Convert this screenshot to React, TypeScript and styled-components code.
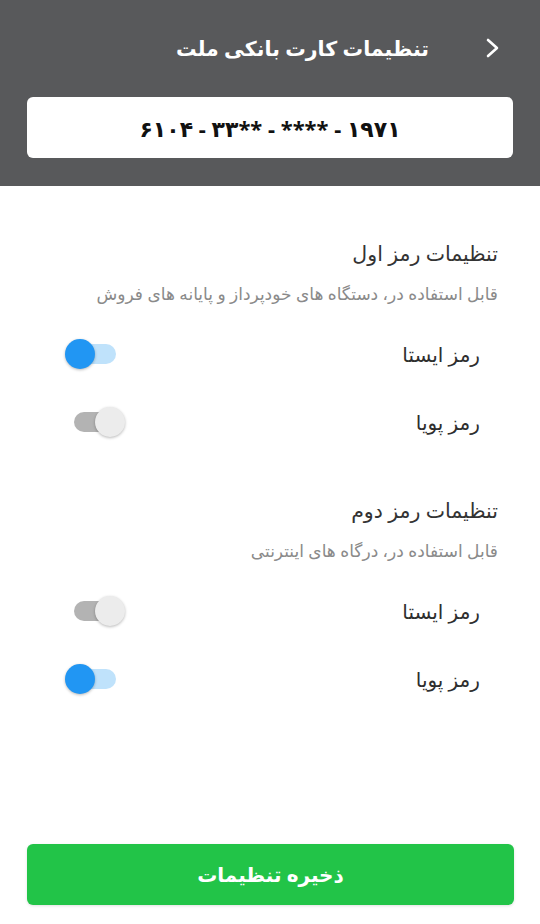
import React from "react";
import styled, { createGlobalStyle } from "styled-components";

const Global = createGlobalStyle`
  html, body { margin: 0; padding: 0; background: #ffffff; }
  body { font-family: "Noto Sans", "DejaVu Sans", sans-serif; }
  * { box-sizing: border-box; }
`;

const Page = styled.div`
  direction: rtl;
  min-height: 100vh;
  display: flex;
  flex-direction: column;
  background: #ffffff;
`;

const Header = styled.header`
  background: #58595b;
  height: 186px;
  padding: 25px 27px 0;
  display: flex;
  flex-direction: column;
`;

const TitleRow = styled.div`
  display: flex;
  align-items: center;
  gap: 56px;
  padding-right: 12px;
  height: 46px;
`;

const BackIcon = styled.svg`
  width: 16px;
  height: 22px;
  flex: none;
`;

const HeaderTitle = styled.h1`
  margin: 0;
  color: #ffffff;
  font-size: 20.5px;
  font-weight: 700;
  line-height: 30px;
`;

const CardBox = styled.div`
  margin-top: 26px;
  height: 61px;
  background: #ffffff;
  border-radius: 6px;
  display: flex;
  align-items: center;
  justify-content: center;
  color: #111111;
  font-size: 22px;
  font-weight: 700;
`;

const CardNumber = styled.span`
  direction: ltr;
  unicode-bidi: isolate;
  white-space: pre;
`;

const Content = styled.main`
  padding-top: 52px;
  display: flex;
  flex-direction: column;
  gap: 39px;
`;

const Section = styled.section`
  display: flex;
  flex-direction: column;
`;

const SectionTitle = styled.h2`
  margin: 0;
  padding-right: 42px;
  font-size: 20.5px;
  font-weight: 500;
  line-height: 30px;
  color: #333333;
`;

const SectionHint = styled.p`
  margin: 12px 0 0;
  padding-right: 42px;
  font-size: 17px;
  line-height: 28px;
  color: #8a8a8a;
`;

const RowList = styled.div`
  margin-top: 12px;
  display: flex;
  flex-direction: column;
`;

const Row = styled.div`
  height: 68px;
  display: flex;
  align-items: center;
  justify-content: space-between;
  padding: 0 60px 0 65px;
`;

const RowLabel = styled.span`
  font-size: 20px;
  font-weight: 500;
  color: #2e2e2e;
`;

const SwitchBox = styled.div`
  position: relative;
  width: 60px;
  height: 30px;
  direction: ltr;
  flex: none;
`;

const Track = styled.div<{ $on: boolean }>`
  position: absolute;
  left: 9px;
  top: 5px;
  width: 42px;
  height: 20px;
  border-radius: 10px;
  background: ${(p) => (p.$on ? "#bfe2fb" : "#b3b3b3")};
`;

const Thumb = styled.div<{ $on: boolean }>`
  position: absolute;
  top: 0;
  left: ${(p) => (p.$on ? "0px" : "30px")};
  width: 30px;
  height: 30px;
  border-radius: 50%;
  background: ${(p) => (p.$on ? "#2196f3" : "#ececec")};
  box-shadow: 0 1px 3px rgba(0, 0, 0, 0.28);
`;

const Footer = styled.div`
  margin-top: auto;
  padding: 0 26px 19px 27px;
`;

const SaveButton = styled.button`
  width: 100%;
  height: 61px;
  border: none;
  border-radius: 6px;
  background: #22c448;
  color: #ffffff;
  font-family: inherit;
  font-size: 20px;
  font-weight: 700;
  box-shadow: 0 1px 3px rgba(0, 0, 0, 0.12);
`;

const Switch = ({ on }: { on: boolean }) => (
  <SwitchBox>
    <Track $on={on} />
    <Thumb $on={on} />
  </SwitchBox>
);

type Item = { label: string; on: boolean };
type Group = { title: string; hint: string; items: Item[] };

const groups: Group[] = [
  {
    title: "تنظیمات رمز اول",
    hint: "قابل استفاده در، دستگاه های خودپرداز و پایانه های فروش",
    items: [
      { label: "رمز ایستا", on: true },
      { label: "رمز پویا", on: false },
    ],
  },
  {
    title: "تنظیمات رمز دوم",
    hint: "قابل استفاده در، درگاه های اینترنتی",
    items: [
      { label: "رمز ایستا", on: false },
      { label: "رمز پویا", on: true },
    ],
  },
];

export default function App() {
  return (
    <>
      <Global />
      <Page>
        <Header>
          <TitleRow>
            <BackIcon viewBox="0 0 16 22">
              <path d="M3 3 L12 11 L3 19" fill="none" stroke="#ffffff" strokeWidth="2.6" strokeLinecap="round" strokeLinejoin="round" />
            </BackIcon>
            <HeaderTitle>تنظیمات کارت بانکی ملت</HeaderTitle>
          </TitleRow>
          <CardBox>
            <CardNumber>۶۱۰۴ - ۳۳** - **** - ۱۹۷۱</CardNumber>
          </CardBox>
        </Header>
        <Content>
          {groups.map((g) => (
            <Section key={g.title}>
              <SectionTitle>{g.title}</SectionTitle>
              <SectionHint>{g.hint}</SectionHint>
              <RowList>
                {g.items.map((it) => (
                  <Row key={it.label}>
                    <RowLabel>{it.label}</RowLabel>
                    <Switch on={it.on} />
                  </Row>
                ))}
              </RowList>
            </Section>
          ))}
        </Content>
        <Footer>
          <SaveButton>ذخیره تنظیمات</SaveButton>
        </Footer>
      </Page>
    </>
  );
}
